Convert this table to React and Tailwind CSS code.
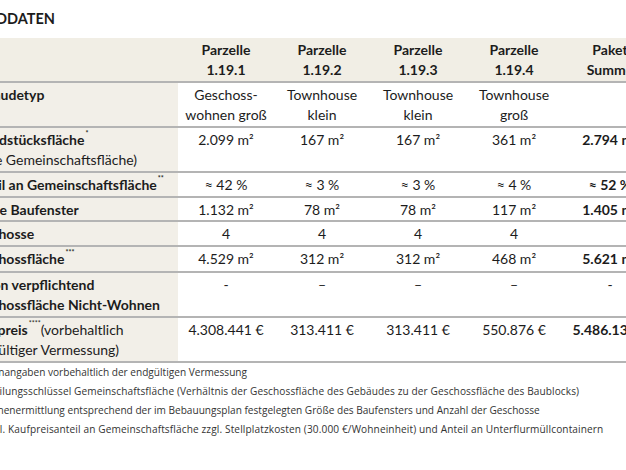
import React from "react";

const cols = "grid grid-cols-[210px_96px_96px_96px_96px_96px]";

function Sup({ children }) {
  return <sup className="text-[7px] align-super leading-none ml-[1px]">{children}</sup>;
}

function Row({ h, label, values, boldLast = true, header = false }) {
  return (
    <div className={`${cols} ${h} border-b-2 border-[#b4b4b4] ${header ? "bg-[#f1eee5]" : ""}`}>
      <div className={`pt-[2px] leading-[20px] ${header ? "" : "bg-[#f2efe8]"} whitespace-nowrap`}>{label}</div>
      {values.map((v, i) => (
        <div
          key={i}
          className={`pt-[2px] leading-[20px] text-center whitespace-nowrap ${
            header || (boldLast && i === 4) ? "font-bold" : ""
          }`}
        >
          {v}
        </div>
      ))}
    </div>
  );
}

function Two({ a, b }) {
  return (
    <>
      <div>{a}</div>
      <div>{b}</div>
    </>
  );
}

export default function App() {
  return (
    <div className="w-[626px] h-[470px] overflow-hidden bg-white font-['Lato',sans-serif] text-[14px] text-[#1c1c1c]">
      <div className="ml-[-32px] w-[690px]">
        <div className="h-[38px] w-[87px] flex items-center justify-end">
          <span className="shrink-0 whitespace-nowrap text-[14.5px] font-bold">GRUNDDATEN</span>
        </div>

        <Row
          h="h-[45px]"
          header
          label=""
          values={[
            <Two a="Parzelle" b="1.19.1" />,
            <Two a="Parzelle" b="1.19.2" />,
            <Two a="Parzelle" b="1.19.3" />,
            <Two a="Parzelle" b="1.19.4" />,
            <Two a="Paket" b="Summe" />,
          ]}
        />
        <Row
          h="h-[45px]"
          label={<span className="font-bold">Gebäudetyp</span>}
          values={[
            <Two a="Geschoss-" b="wohnen groß" />,
            <Two a="Townhouse" b="klein" />,
            <Two a="Townhouse" b="klein" />,
            <Two a="Townhouse" b="groß" />,
            "",
          ]}
        />
        <Row
          h="h-[45px]"
          label={
            <>
              <div className="font-bold">
                Grundstücksfläche<Sup>*</Sup>
              </div>
              <div>(ohne Gemeinschaftsfläche)</div>
            </>
          }
          values={["2.099 m²", "167 m²", "167 m²", "361 m²", "2.794 m²"]}
        />
        <Row
          h="h-[25px]"
          label={
            <span className="font-bold">
              Anteil an Gemeinschaftsfläche<Sup>**</Sup>
            </span>
          }
          values={["≈ 42 %", "≈ 3 %", "≈ 3 %", "≈ 4 %", "≈ 52 %"]}
        />
        <Row
          h="h-[24px]"
          label={<span className="font-bold">Größe Baufenster</span>}
          values={["1.132 m²", "78 m²", "78 m²", "117 m²", "1.405 m²"]}
        />
        <Row
          h="h-[25px]"
          label={<span className="font-bold">Geschosse</span>}
          values={["4", "4", "4", "4", ""]}
        />
        <Row
          h="h-[26px]"
          label={
            <span className="font-bold">
              Geschossfläche<Sup>***</Sup>
            </span>
          }
          values={["4.529 m²", "312 m²", "312 m²", "468 m²", "5.621 m²"]}
        />
        <Row
          h="h-[45px]"
          boldLast={false}
          label={
            <div className="font-bold">
              <div>Davon verpflichtend</div>
              <div>Geschossfläche Nicht-Wohnen</div>
            </div>
          }
          values={["-", "–", "–", "–", "-"]}
        />
        <Row
          h="h-[45px]"
          label={
            <>
              <div>
                <span className="font-bold">Kaufpreis</span>
                <Sup>****</Sup>(vorbehaltlich
              </div>
              <div>endgültiger Vermessung)</div>
            </>
          }
          values={["4.308.441 €", "313.411 €", "313.411 €", "550.876 €", "5.486.139 €"]}
        />

        <div className="ml-[-8px] font-['Open_Sans',sans-serif] text-[10.1px] leading-[19px] text-[#333]">
          <div>* Flächenangaben vorbehaltlich der endgültigen Vermessung</div>
          <div className="tracking-[0.1px]">** Verteilungsschlüssel Gemeinschaftsfläche (Verhältnis der Geschossfläche des Gebäudes zu der Geschossfläche des Baublocks)</div>
          <div>*** Flächenermittlung entsprechend der im Bebauungsplan festgelegten Größe des Baufensters und Anzahl der Geschosse</div>
          <div className="tracking-[0.12px]">**** inkl. Kaufpreisanteil an Gemeinschaftsfläche zzgl. Stellplatzkosten (30.000 €/Wohneinheit) und Anteil an Unterflurmüllcontainern</div>
        </div>
      </div>
    </div>
  );
}
